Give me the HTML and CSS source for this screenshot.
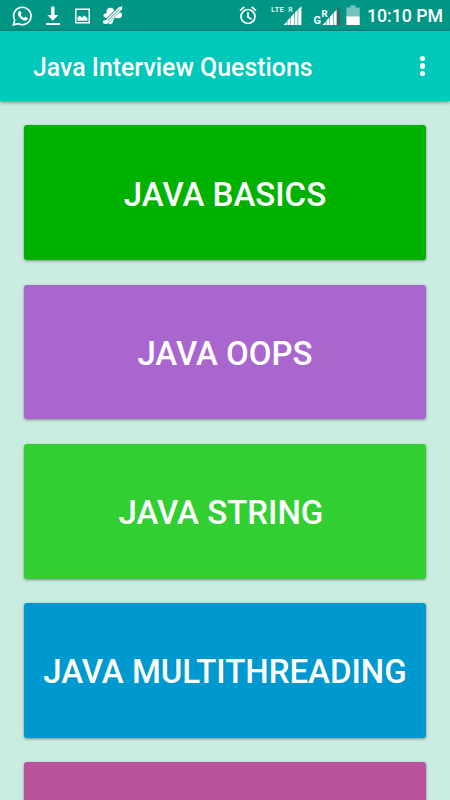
FILE: index.html
```html
<!DOCTYPE html>
<html lang="en">
<head>
    <meta charset="UTF-8">
    <meta name="viewport" content="width=device-width, initial-scale=1.0">
    <title>Java Interview Questions</title>
    <link rel="stylesheet" href="styles.css">
</head>
<body>
    <div class="status-bar">
        <svg class="notifications" width="130" height="31" viewBox="0 0 130 31">
            <!-- whatsapp -->
            <path d="M13.4 24.9l1.3-4.7a8.7 8.7 0 1 1 3.4 3.4z" fill="none" stroke="#fff" stroke-width="1.7"/>
            <path d="M19 11.3c.7-.6 1.5-.4 1.8.3l.7 1.7c.1.5-.8 1.1-.8 1.5.7 1.5 1.8 2.5 3.3 3.1.5 0 1-1.2 1.500-1.100l1.900.900c.800.500.100 2-.800 2.500-1.700.800-4 .100-6-1.700-2.400-2.200-3.700-5.200-1.600-7.200z" fill="#fff"/>
            <!-- download -->
            <path d="M51.200 6.500h3.300v8.500h3.800l-5.500 5.700-5.500-5.700h3.900zM46 23h14v2H46z" fill="#fff"/>
            <!-- picture -->
            <path d="M75.800 9.300h13.400v13.400H75.800z" fill="none" stroke="#fff" stroke-width="1.400"/>
            <path d="M77.500 20.700v-3.400l2.300-1.500 2.200 1.800 2.400-2.200 3 2.600v2.700z" fill="#fff"/>
            <!-- cleaner -->
            <path d="M107 9.500c2-2.300 5.500-2.200 7 .5l1 2.500-6 5c-1.500.8-4 .4-5.200-.8-.9-1.200-.2-3 1.500-3.300.7-.1 1.300 0 1.700.3-.6-1.500-.7-3 0-4.200zM118 12l3.500.8c1 1.700.7 3.500-.5 4.700-1.500 1.200-4 .3-6 .5-1.300.4-1.600 2-2 3.500-.4 1.800-1.600 3-3 2.800-1.600-.3-2.200-2-1.500-3.600z" fill="#fff"/>
            <path d="M121.500 7L105 23" stroke="#009686" stroke-width="4.800"/>
            <path d="M122 8L107 23M119.800 7.200L105 22" stroke="#fff" stroke-width="1.500"/>
            <path d="M118.500 8l3.800-2-.6 4z" fill="#fff"/>
            <ellipse cx="105.500" cy="22" rx="2.600" ry="1.900" fill="#fff"/>
        </svg>

        <div class="system-cont">
            <svg width="134" height="31" viewBox="230 0 134 31">
                <!-- alarm -->
                <g fill="none" stroke="#fff" stroke-width="1.700">
                    <circle cx="248" cy="16.500" r="7"/>
                    <path d="M240 10.500l4.300-3.600M256 10.500l-4.300-3.600M248 12v5l3.500 2.200"/>
                </g>
                <!-- sim 1 -->
                <text x="271" y="12" class="lte" textLength="13" lengthAdjust="spacingAndGlyphs">LTE</text>
                <text x="288.300" y="12" class="roaming-small">R</text>
                <path d="M283.500 25l3.300-3.300V25zM287.400 25v-4.500l3.100-3.200V25zM291 25v-8.500l3-3V25zM294.600 25V12.700l3-3V25zM298.200 25V9.300l3.200-3V25z" fill="#fff"/>
                <!-- sim 2 -->
                <text x="313.500" y="24.200" class="network">G</text>
                <text x="321.500" y="16.500" class="roaming">R</text>
                <path d="M322.500 25l3.300-3.300V25zM326.400 25v-4.500l3.100-3.200V25zM330 25v-8.500l3-3V25zM333.600 25V12.700l3-3V25z" fill="#fff"/>
                <path d="M337 25V9.300l3.200-3V25z" fill="#47615e"/>
                <!-- battery -->
                <path d="M346.400 7.500h4V5.300h5v2.200h4.300V17h-13.300z" fill="#72c3ba"/>
                <path d="M346.400 16.500h13.300V25h-13.300z" fill="#fff"/>
            </svg>
            <div class="clock">10:10 PM</div>
        </div>
    </div>

    <div class="app-bar">
        <div class="app-title">Java Interview Questions</div>
        <div class="menu-btn">
            <span class="dot"></span>
            <span class="dot"></span>
            <span class="dot"></span>
        </div>
    </div>

    <div class="main-cont">
        <div class="topic green">JAVA BASICS</div>
        <div class="topic purple">JAVA OOPS</div>
        <div class="topic lime">JAVA STRING&nbsp;</div>
        <div class="topic blue">JAVA MULTITHREADING</div>
        <div class="topic pink"></div>
    </div>
</body>
</html>
```
FILE: styles.css
```css
* {
    box-sizing: border-box;
}

body {
    margin: 0;
    height: 100vh;
    overflow: hidden;
    display: flex;
    flex-direction: column;
    background-color: #cbece0;
    color: white;
    font-family: Roboto, sans-serif;
    font-weight: 500;
}

.status-bar {
    height: 31px;
    flex-shrink: 0;
    display: flex;
    justify-content: space-between;
    background-color: #009686;
}

.status-bar svg {
    display: block;
}

.system-cont {
    display: flex;
}

.clock {
    width: 86px;
    padding-left: 3px;
    font-size: 17.7px;
    line-height: 33px;
    white-space: nowrap;
}

.lte,
.roaming-small {
    fill: #d5efec;
    font-size: 7px;
    font-weight: 700;
}

.network,
.roaming {
    fill: white;
    font-size: 11px;
    font-weight: 700;
}

.roaming {
    font-size: 9.5px;
}

.app-bar {
    height: 70px;
    flex-shrink: 0;
    padding: 0 25px 0 33px;
    display: flex;
    align-items: center;
    justify-content: space-between;
    background-color: #00c8ba;
    box-shadow: 0 1px 4px rgba(0, 0, 0, 0.5);
}

.app-title {
    font-size: 24.9px;
    line-height: 30px;
    padding-top: 3px;
}

.menu-btn {
    display: flex;
    flex-direction: column;
    gap: 2px;
}

.dot {
    width: 5.5px;
    height: 5.5px;
    border-radius: 50%;
    background-color: white;
}

.main-cont {
    flex: 1;
    min-height: 0;
    overflow: hidden;
    padding: 24.4px 24px 0;
    display: flex;
    flex-direction: column;
    gap: 24.4px;
}

.topic {
    height: 134.8px;
    flex-shrink: 0;
    padding-top: 3px;
    display: flex;
    align-items: center;
    justify-content: center;
    border-radius: 3px;
    font-size: 33px;
    white-space: nowrap;
    box-shadow: 0 1px 3px rgba(0, 0, 0, 0.4);
}

.green {
    background-color: #00b200;
}

.purple {
    background-color: #aa66cf;
}

.lime {
    background-color: #32cf32;
}

.blue {
    background-color: #0099cf;
}

.pink {
    background-color: #ba519b;
}
```
